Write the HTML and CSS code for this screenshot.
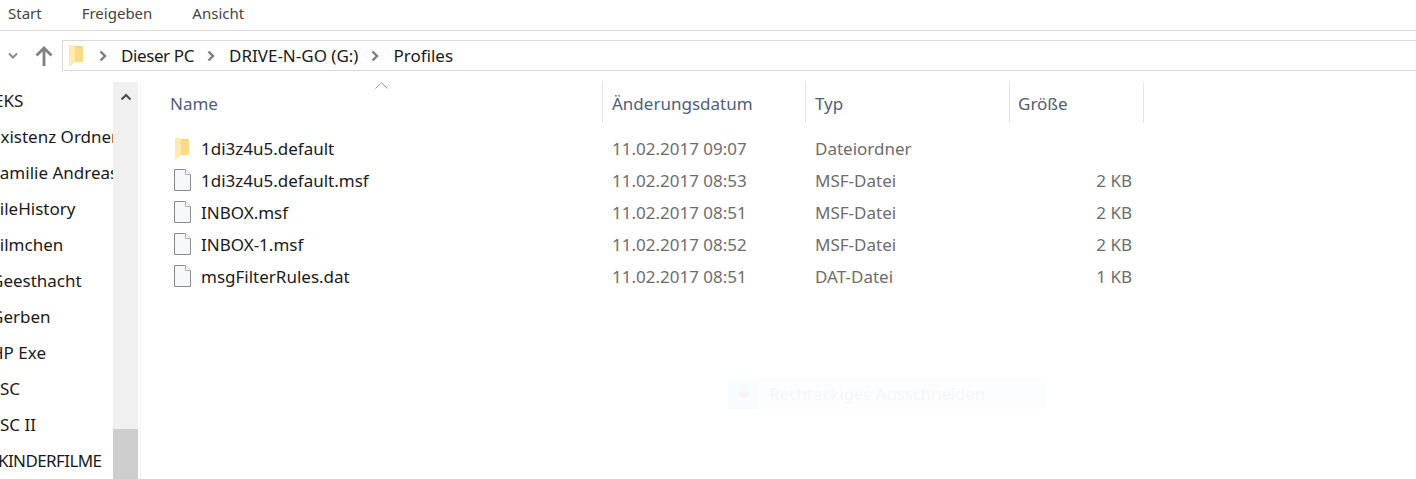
FILE: index.html
```html
<!DOCTYPE html>
<html lang="de">
<head>
    <meta charset="UTF-8">
    <title>Profiles</title>
    <link rel="stylesheet" href="styles.css">
</head>
<body>
    <svg class="defs" width="0" height="0">
        <symbol id="folder" viewBox="0 0 15 21">
            <path d="M6 1H13L14 2V17H6Z" fill="#f8d775"/>
            <path d="M6 3H14V17H6Z" fill="#fbdc84"/>
            <path d="M0 0H5L6 1V17.500L1 21H0Z" fill="#fcebb0"/>
        </symbol>
        <symbol id="file" viewBox="0 0 17 22">
            <path d="M.5.5H11.5L16.500 5.500V21.500H.5Z" fill="#f7f8fa" stroke="#8c8c8c"/>
            <path d="M11.500.5V5.500H16.500" fill="#fff" stroke="#b5b5b5"/>
        </symbol>
    </svg>

    <div class="tabs">
        <span class="tab">Start</span>
        <span class="tab">Freigeben</span>
        <span class="tab">Ansicht</span>
    </div>

    <div class="navbar">
        <svg class="nav-down" width="12" height="8" viewBox="0 0 12 8"><path d="M2 1.500L6 5.500L10 1.500" fill="none" stroke="#8a8a8a" stroke-width="2"/></svg>
        <svg class="nav-up" width="18" height="20" viewBox="0 0 18 20"><path d="M9 20V2M1.500 9.500L9 2L16.500 9.500" fill="none" stroke="#808080" stroke-width="2.800"/></svg>
        <div class="address">
            <svg class="address-folder" width="15" height="21"><use href="#folder"/></svg>
            <svg class="crumb-arrow" width="8" height="12" viewBox="0 0 8 12"><path d="M1.500 1.500L6 6L1.500 10.500" fill="none" stroke="#7d7d7d" stroke-width="2.400"/></svg>
            <span class="crumb crumb-tight">Dieser PC</span>
            <svg class="crumb-arrow" width="8" height="12" viewBox="0 0 8 12"><path d="M1.500 1.500L6 6L1.500 10.500" fill="none" stroke="#7d7d7d" stroke-width="2.400"/></svg>
            <span class="crumb">DRIVE-N-GO (G:)</span>
            <svg class="crumb-arrow" width="8" height="12" viewBox="0 0 8 12"><path d="M1.500 1.500L6 6L1.500 10.500" fill="none" stroke="#7d7d7d" stroke-width="2.400"/></svg>
            <span class="crumb">Profiles</span>
        </div>
    </div>

    <div class="main">
        <div class="sidebar">
            <div class="tree">
                <div class="tree-item cut-small">EKS</div>
                <div class="tree-item">Existenz Ordner</div>
                <div class="tree-item">Familie Andreas</div>
                <div class="tree-item">FileHistory</div>
                <div class="tree-item">Filmchen</div>
                <div class="tree-item">Geesthacht</div>
                <div class="tree-item">Gerben</div>
                <div class="tree-item">HP Exe</div>
                <div class="tree-item cut-none">SC</div>
                <div class="tree-item cut-none">SC II</div>
                <div class="tree-item cut-caps">KINDERFILME</div>
            </div>
            <div class="scrollbar">
                <svg class="scroll-up" width="12" height="8" viewBox="0 0 12 8"><path d="M1.500 6.500L6 2L10.500 6.500" fill="none" stroke="#505050" stroke-width="2.200"/></svg>
                <div class="scroll-thumb"></div>
            </div>
        </div>

        <div class="files">
            <svg class="sort-caret" width="13" height="7" viewBox="0 0 13 7"><path d="M.5 6.500L6.500 .8L12.500 6.500" fill="none" stroke="#9a9a9a"/></svg>
            <div class="columns head">
                <div class="col-head first">Name</div>
                <div class="col-head">Änderungsdatum</div>
                <div class="col-head">Typ</div>
                <div class="col-head last">Größe</div>
            </div>
            <div class="rows">
                <div class="columns row">
                    <div class="name"><svg class="icon-folder" width="15" height="21"><use href="#folder"/></svg>1di3z4u5.default</div>
                    <div class="cell">11.02.2017 09:07</div>
                    <div class="cell">Dateiordner</div>
                    <div class="size"></div>
                </div>
                <div class="columns row">
                    <div class="name"><svg class="icon-file" width="17" height="22"><use href="#file"/></svg>1di3z4u5.default.msf</div>
                    <div class="cell">11.02.2017 08:53</div>
                    <div class="cell">MSF-Datei</div>
                    <div class="size">2 KB</div>
                </div>
                <div class="columns row">
                    <div class="name"><svg class="icon-file" width="17" height="22"><use href="#file"/></svg>INBOX.msf</div>
                    <div class="cell">11.02.2017 08:51</div>
                    <div class="cell">MSF-Datei</div>
                    <div class="size">2 KB</div>
                </div>
                <div class="columns row">
                    <div class="name"><svg class="icon-file" width="17" height="22"><use href="#file"/></svg>INBOX-1.msf</div>
                    <div class="cell">11.02.2017 08:52</div>
                    <div class="cell">MSF-Datei</div>
                    <div class="size">2 KB</div>
                </div>
                <div class="columns row">
                    <div class="name"><svg class="icon-file" width="17" height="22"><use href="#file"/></svg>msgFilterRules.dat</div>
                    <div class="cell">11.02.2017 08:51</div>
                    <div class="cell">DAT-Datei</div>
                    <div class="size">1 KB</div>
                </div>
            </div>
        </div>
    </div>

    <div class="ghost">
        <div class="ghost-icon"><span class="ghost-dot"></span></div>
        <span class="ghost-text">Rechteckiges Ausschneiden</span>
    </div>
</body>
</html>
```

FILE: styles.css
```css
body {
    margin: 0;
    height: 479px;
    overflow: hidden;
    background-color: #fff;
    font-family: "Noto Sans", "Open Sans", sans-serif;
    font-size: 17px;
    color: #1a1a1a;
}
.defs {
    display: block;
    height: 0;
}
.tabs {
    display: flex;
    gap: 40px;
    height: 31px;
    align-items: center;
    padding-left: 8px;
    padding-bottom: 4px;
    box-sizing: border-box;
    border-bottom: 1px solid #dadada;
    font-size: 15px;
    color: #444;
}
.navbar {
    display: flex;
    align-items: center;
    height: 31px;
    margin-top: 9px;
}
.nav-down {
    margin-left: 7px;
}
.nav-up {
    margin-left: 16px;
    margin-right: 9px;
}
.address {
    flex: 1;
    display: flex;
    align-items: center;
    height: 100%;
    box-sizing: border-box;
    border: 1px solid #d9d9d9;
    border-right: 0;
    padding-left: 6px;
}
.address-folder {
    margin-right: 15px;
}
.crumb-arrow {
    margin-right: 14px;
}
.crumb {
    margin-right: 13px;
}
.crumb-tight {
    letter-spacing: -0.4px;
}
.main {
    display: flex;
    height: 397px;
    margin-top: 11px;
}
.sidebar {
    display: flex;
    width: 141px;
    flex: none;
    border-right: 1px solid #f4f4f4;
    box-sizing: border-box;
}
.tree {
    width: 113px;
    overflow: hidden;
    white-space: nowrap;
    padding-top: 1px;
}
.tree-item {
    height: 36px;
    line-height: 36px;
    margin-left: -9px;
}
.tree-item.cut-small {
    margin-left: -6px;
}
.tree-item.cut-none {
    margin-left: 0;
}
.tree-item.cut-caps {
    margin-left: -2px;
    letter-spacing: -0.6px;
}
.scrollbar {
    position: relative;
    width: 25px;
    background-color: #f0f0f0;
}
.scroll-up {
    position: absolute;
    left: 7px;
    top: 11px;
}
.scroll-thumb {
    position: absolute;
    left: 0;
    right: 0;
    bottom: 0;
    height: 50px;
    background-color: #cdcdcd;
}
.files {
    position: relative;
    flex: 1;
}
.sort-caret {
    position: absolute;
    left: 234px;
    top: 0;
}
.columns {
    display: grid;
    grid-template-columns: 461px 203px 204px 135px;
}
.head {
    height: 41px;
    align-items: stretch;
}
.col-head {
    display: flex;
    align-items: center;
    padding-left: 9px;
    padding-top: 2px;
    border-left: 1px solid #e5e5e5;
    color: #4f6078;
}
.col-head.first {
    padding-left: 29px;
    border-left: 0;
}
.col-head.last {
    padding-left: 8px;
    border-right: 1px solid #e5e5e5;
}
.rows {
    padding-top: 9px;
}
.row {
    height: 32px;
    align-items: center;
}
.name {
    display: flex;
    align-items: center;
    padding-left: 33px;
}
.icon-file {
    margin-right: 10px;
}
.icon-folder {
    margin-left: 1px;
    margin-right: 11px;
}
.cell {
    padding-left: 10px;
    color: #6d6d6d;
}
.size {
    padding-right: 12px;
    text-align: right;
    color: #6d6d6d;
}
.ghost {
    position: absolute;
    left: 728px;
    top: 378px;
    display: flex;
    align-items: center;
    width: 319px;
    height: 31px;
    background-color: #fcfdfe;
}
.ghost-icon {
    display: flex;
    align-items: center;
    justify-content: center;
    width: 31px;
    height: 31px;
    background-color: #f9fcff;
}
.ghost-dot {
    width: 10px;
    height: 10px;
    border-radius: 50%;
    background-color: #f6f6f6;
}
.ghost-text {
    margin-left: 10px;
    font-size: 16.7px;
    color: #f6f6f7;
}
```
